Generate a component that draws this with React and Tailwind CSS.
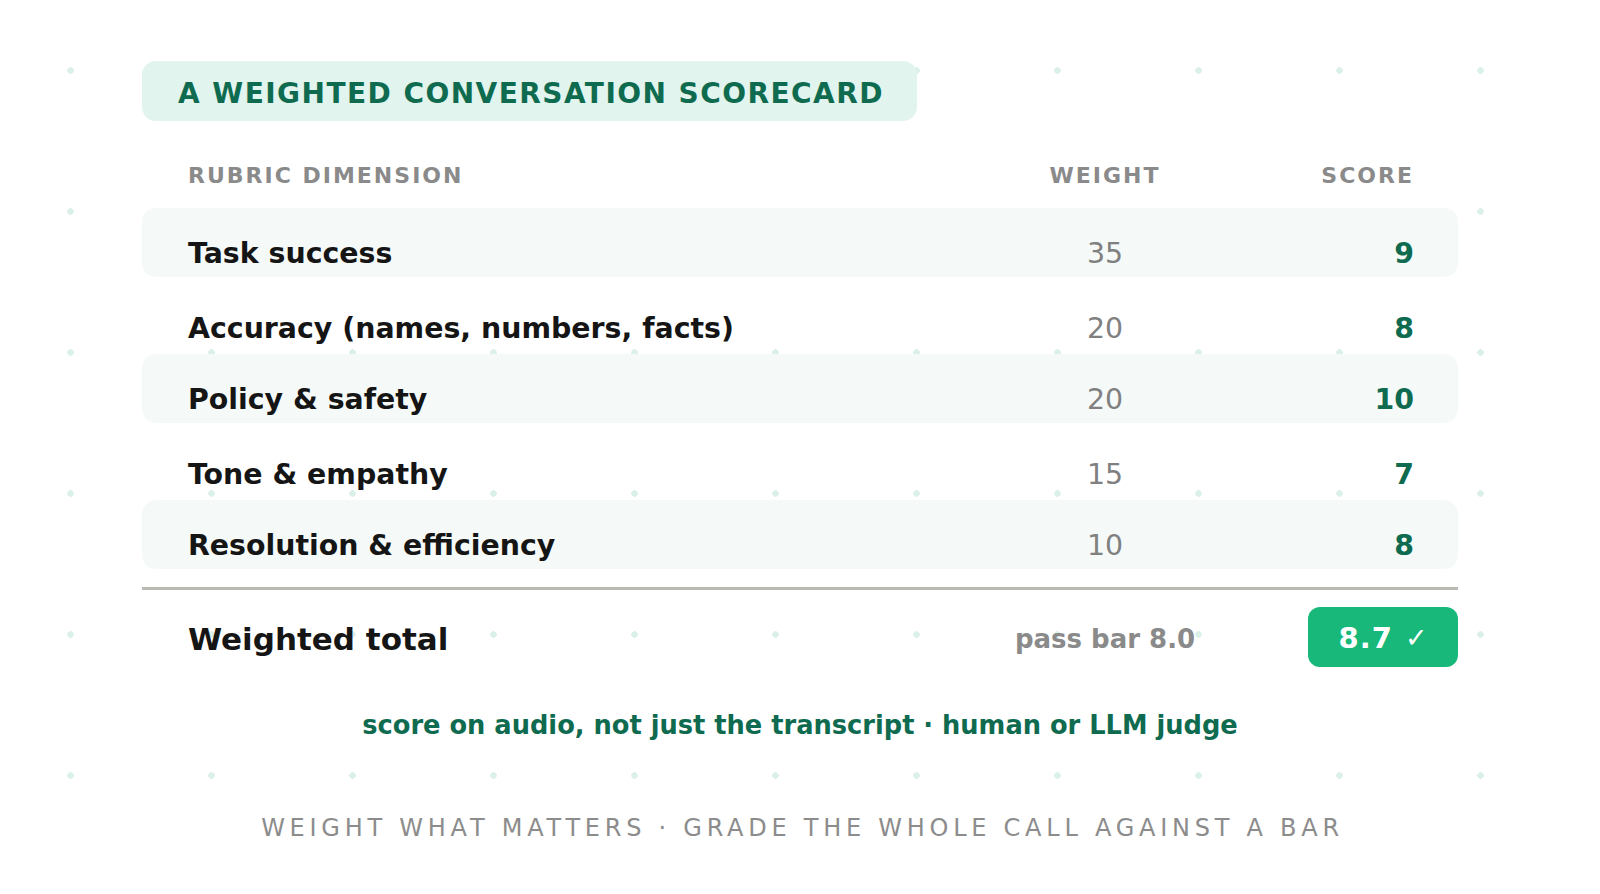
const rows = [
  { label: 'Task success', weight: 35, score: 9, shaded: true },
  { label: 'Accuracy (names, numbers, facts)', weight: 20, score: 8, shaded: false },
  { label: 'Policy & safety', weight: 20, score: 10, shaded: true },
  { label: 'Tone & empathy', weight: 15, score: 7, shaded: false },
  { label: 'Resolution & efficiency', weight: 10, score: 8, shaded: true },
];

const App = () => {
  return (
    <div className="h-[894px] w-full overflow-hidden bg-white font-['DejaVu_Sans',sans-serif] [background-image:radial-gradient(circle,#dbf0e8_3px,transparent_3.5px)] [background-size:141px_141px]">
      <div className="ml-[142px] w-[1316px] pt-[61px]">
        <div className="flex h-[60px] w-[775px] items-center rounded-[14px] bg-[#e1f4ee] pl-[36px] pt-[6px]">
          <h1 className="text-[28px] font-bold leading-[32px] tracking-[1.45px] text-[#0f6b4f]">
            A WEIGHTED CONVERSATION SCORECARD
          </h1>
        </div>

        <div className="mt-[44px] grid grid-cols-[1fr_160px_229px] pl-[46px] pr-[44px] text-[22px] font-bold leading-[22px] tracking-[2px] text-[#8a8a8a]">
          <span>RUBRIC DIMENSION</span>
          <span className="text-center">WEIGHT</span>
          <span className="text-right">SCORE</span>
        </div>

        <div className="mt-[21px]">
          {rows.map((row) => (
            <div
              key={row.label}
              className={`mb-[4px] grid h-[69px] grid-cols-[1fr_160px_229px] rounded-[14px] pl-[46px] pr-[44px] text-[28.4px] leading-[32px] ${
                row.shaded ? 'bg-[#f5faf8] pt-[30px]' : 'pt-[32px]'
              }`}
            >
              <span className="font-bold text-[#151515]">{row.label}</span>
              <span className="text-center text-[#808080]">{row.weight}</span>
              <span className="text-right font-bold text-[#0f6b4f]">{row.score}</span>
            </div>
          ))}
        </div>

        <div className="mt-[18px] h-[3px] bg-[#b9b9b1]" />

        <div className="mt-[17px] grid h-[60px] grid-cols-[1fr_160px_273px] items-center pl-[46px]">
          <span className="pt-[4px] text-[31px] font-bold leading-[36px] text-[#151515]">Weighted total</span>
          <div className="flex justify-center pt-[4px]">
            <span className="whitespace-nowrap text-[26px] font-bold leading-[30px] text-[#8a8a8a]">pass bar 8.0</span>
          </div>
          <div className="flex justify-end">
            <div className="flex h-[60px] w-[150px] items-center justify-center gap-[12px] rounded-[12px] bg-[#17b87a] pt-[1px] text-white">
              <span className="text-[29px] font-bold leading-[34px] tracking-[1px]">8.7</span>
              <span className="text-[27px] leading-[30px]">✓</span>
            </div>
          </div>
        </div>
      </div>

      <p className="mt-[43px] text-center text-[25.7px] font-bold leading-[30px] text-[#0f6b4f]">
        score on audio, not just the transcript · human or LLM judge
      </p>

      <p className="mt-[74px] pl-[5px] text-center text-[24px] leading-[28px] tracking-[4.75px] text-[#8c8c8c]">
        WEIGHT WHAT MATTERS · GRADE THE WHOLE CALL AGAINST A BAR
      </p>
    </div>
  );
};

export default App;
